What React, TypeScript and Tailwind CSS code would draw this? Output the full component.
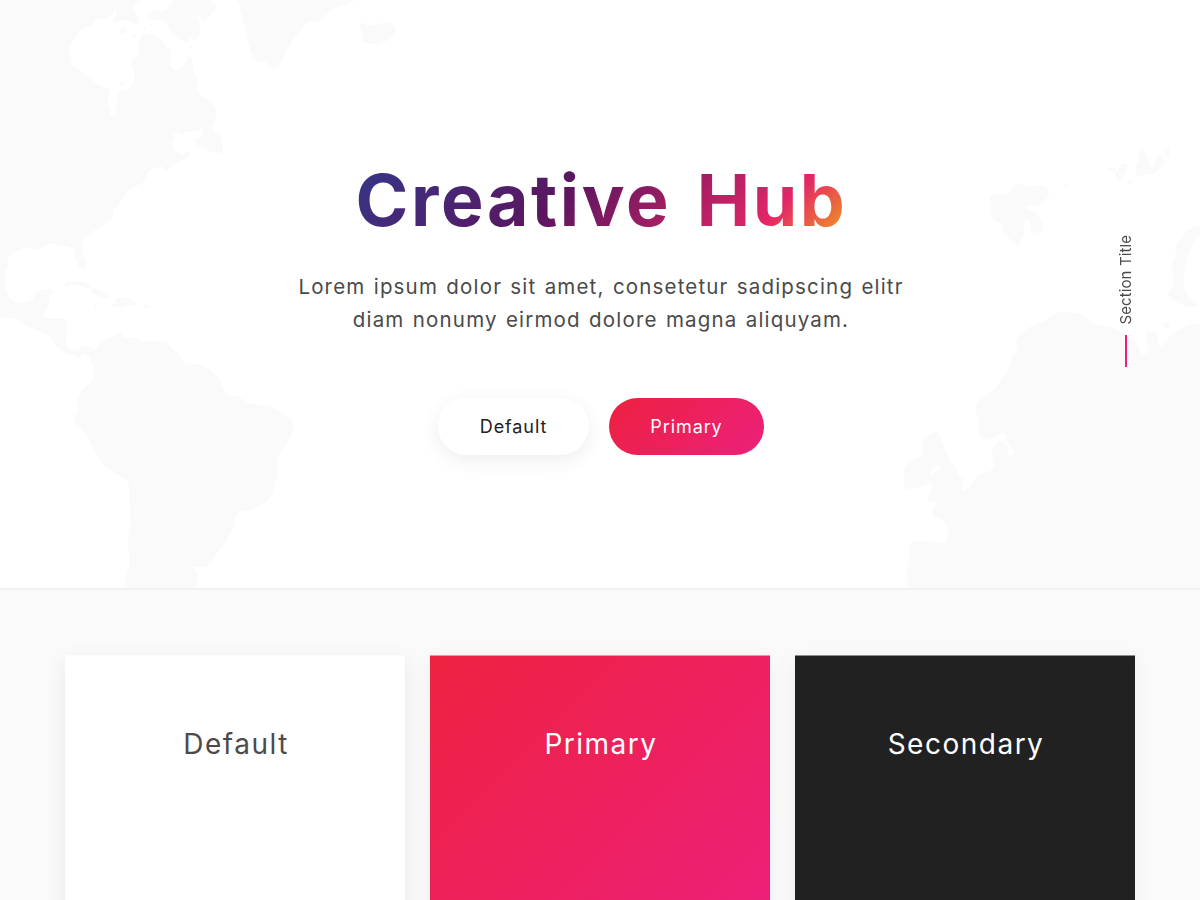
type Pt = [number, number];

const parse = (s: string): Pt[] =>
  s.trim().split(/\s+/).map((p) => p.split(",").map(Number) as Pt);

function coast(s: string): string {
  const p = parse(s);
  const n = p.length;
  const k = 0.13;
  let d = `M${p[0][0]},${p[0][1]}`;
  for (let i = 0; i < n; i++) {
    const a = p[(i - 1 + n) % n];
    const b = p[i];
    const c = p[(i + 1) % n];
    const e = p[(i + 2) % n];
    d += `C${b[0] + (c[0] - a[0]) * k},${b[1] + (c[1] - a[1]) * k} ${c[0] - (e[0] - b[0]) * k},${c[1] - (e[1] - b[1]) * k} ${c[0]},${c[1]}`;
  }
  return d + "Z";
}

const northAmerica =
  "-60,-60 460,-60 420,0 398,18 412,45 417,68 405,74 380,62 360,62 345,71 338,58 348,42 346,29 338,42 315,57 286,59 281,74 250,86 225,113 209,145 212,165 216,192 235,206 270,236 300,257 330,266 326,292 324,315 331,325 330,346 337,348 346,348 352,300 358,275 375,269 392,262 403,238 402,208 394,190 412,165 416,135 422,112 430,103 465,108 488,122 500,142 514,152 509,178 514,202 530,210 548,200 568,170 577,180 582,215 592,240 590,268 600,282 632,305 648,328 649,350 639,378 642,397 664,410 668,430 668,455 655,459 625,454 615,443 594,442 586,430 588,416 605,407 611,394 609,376 600,389 580,395 553,397 551,405 537,399 505,397 522,402 524,415 518,435 528,455 548,463 558,455 570,460 566,472 530,489 500,510 487,505 482,499 445,515 432,545 390,570 350,620 338,628 339,650 310,675 262,706 247,728 247,755 258,795 248,811 235,798 224,770 219,746 190,737 150,731 120,748 80,743 45,757 24,775 22,800 15,815 17,860 32,897 62,909 95,900 112,875 150,866 160,873 149,892 145,920 131,950 165,954 195,956 203,970 198,1030 215,1050 235,1048 255,1037 285,1047 310,1022 360,1000 370,1012 400,1013 435,1024 485,1024 520,1048 560,1091 595,1090 610,1102 625,1105 655,1135 675,1180 690,1188 715,1190 750,1210 815,1220 870,1255 878,1270 877,1300 865,1320 850,1350 830,1375 830,1425 820,1470 803,1500 790,1510 775,1518 745,1533 720,1535 703,1560 700,1580 675,1630 650,1660 645,1672 620,1701 583,1700 596,1727 592,1752 577,1766 560,1770 390,1770 375,1766 373,1750 388,1690 384,1620 390,1560 386,1455 370,1435 315,1400 285,1355 260,1305 225,1265 226,1250 235,1230 232,1200 245,1170 280,1135 278,1095 262,1065 248,1063 237,1077 220,1063 202,1063 165,1035 160,1020 130,998 80,980 50,957 0,952 -60,940";

const europe =
  "1020,60 960,75 930,72 880,100 850,130 845,138 835,135 832,102 820,93 798,97 799,128 805,155 785,162 778,145 760,120 740,110 710,88 680,78 650,75 625,60 605,43 545,35 520,42 490,65 455,78 415,108 408,130 412,150 397,170 380,215 345,265 300,300 286,320 294,360 297,400 310,417 330,418 372,399 380,425 403,455 400,464 383,468 384,445 372,424 350,427 336,455 343,490 335,510 295,525 265,563 245,572 250,540 230,522 230,510 200,465 190,430 175,402 165,395 135,409 128,430 130,462 100,480 75,505 72,550 82,569 110,564 145,550 150,522 165,497 183,506 158,520 146,537 158,560 142,597 170,608 192,600 165,615 157,640 165,652 190,663 206,690 200,720 190,728 130,722 100,723 86,740 88,770 77,822 85,842 82,858 90,868 120,872 990,872 1020,866";

const novayaZemlya =
  "1000,275 960,288 920,302 890,345 885,385 875,407 881,432 876,470 863,490 880,510 920,530 945,531 952,520 922,495 910,455 920,390 950,320 1000,295";

const upperIslands = [
  "520,-30 520,0 495,31 455,35 445,44 452,56 490,62 512,92 540,118 565,130 565,112 585,120 600,97 598,68 587,41 605,57 617,59 650,20 634,5 634,-30",
  "732,-30 726,40 740,92 745,130 760,170 775,182 800,188 802,199 820,205 840,196 858,153 893,103 925,67 955,64 1000,28 1066,0 1070,-30",
  "1078,77 1090,68 1108,78 1165,67 1187,87 1184,99 1165,120 1125,134 1090,126 1083,118 1088,95",
  "195,852 205,846 235,844 265,852 272,863 245,860 218,853 200,859",
  "280,865 300,870 325,885 322,894 300,890 275,875",
  "348,895 385,895 410,912 385,917 362,924 328,916 350,910",
  "358,96 362,87 380,86 380,94 368,102",
];

const arcticIslands = [
  "330,205 340,195 380,193 405,168 425,160 440,170 490,165 508,185 495,213 475,224 445,226 443,235 470,250 488,280 488,300 475,308 455,305 450,280 439,268 431,285 430,312 418,342 405,345 395,332 370,310 368,285 335,265 335,235",
  "768,105 776,90 780,65 788,57 800,72 812,107 825,108 830,78 845,75 852,103 828,125 785,137 768,134",
  "679,125 692,111 705,115 711,125 725,103 741,103 738,122 720,151 710,150 706,132 695,120",
];

function WorldMap() {
  return (
    <svg
      className="absolute inset-0 h-full w-full"
      viewBox="0 0 3600 1764"
      preserveAspectRatio="none"
      fill="#fafafa"
      aria-hidden="true"
    >
      <path d={coast(northAmerica)} />
      {upperIslands.map((s) => (
        <path key={s} d={coast(s)} />
      ))}
      <ellipse cx="403" cy="109" rx="6" ry="7" />
      <ellipse cx="435" cy="86" rx="3" ry="5" />
      <ellipse cx="450" cy="78" rx="4" ry="3" />
      <ellipse cx="365" cy="250" rx="8" ry="7" />
      <ellipse cx="574" cy="141" rx="4" ry="5" />
      <ellipse cx="438" cy="920" rx="9" ry="5" />
      <ellipse cx="286" cy="920" rx="6" ry="5" />
      <ellipse cx="504" cy="1030" rx="4" ry="5" />
      <g transform="translate(2640 900)">
        <path d={coast(europe)} />
        <circle cx="860" cy="76" r="10" />
      </g>
      <g transform="translate(2640 390)">
        <path d={coast(novayaZemlya)} />
        {arcticIslands.map((s) => (
          <path key={s} d={coast(s)} />
        ))}
        <ellipse cx="860" cy="65" rx="9" ry="13" />
        <ellipse cx="748" cy="155" rx="6" ry="4" />
        <ellipse cx="838" cy="138" rx="4" ry="5" />
        <ellipse cx="559" cy="166" rx="7" ry="6" />
      </g>
    </svg>
  );
}

export default function App() {
  return (
    <div className="h-[900px] w-[1200px] overflow-hidden bg-[#fafafa] font-['Inter',sans-serif]">
      <header className="relative h-[590px] border-b-2 border-[#f2f2f2] bg-white">
        <WorldMap />
        <div className="relative flex flex-col items-center pt-[155px]">
          <h1 className="bg-[linear-gradient(135deg,#33388a_0%,#5b165f_43%,#e32568_82%,#f09423_97%)] bg-clip-text pl-[3px] text-[71.5px] leading-[90px] font-[650] tracking-[2.6px] whitespace-nowrap text-transparent [word-spacing:6px]">
            Creative Hub
          </h1>
          <p className="mt-[25px] pl-[2px] text-center text-[20.5px] leading-[33px] font-[380] tracking-[1.17px] whitespace-nowrap text-[#4a4a4a] [word-spacing:1.4px]">
            Lorem ipsum dolor sit amet, consetetur sadipscing elitr
            <br />
            diam nonumy eirmod dolore magna aliquyam.
          </p>
          <div className="mt-[62px] flex gap-5 pl-[2px] text-[18px] tracking-[0.9px]">
            <button className="h-[57px] w-[151px] rounded-full bg-white text-[#212121] shadow-[0_5px_20px_rgba(0,0,0,0.07)]">
              Default
            </button>
            <button className="h-[57px] w-[155px] rounded-full bg-[linear-gradient(135deg,#ed213f,#ec207b)] text-white">
              Primary
            </button>
          </div>
        </div>
        <aside className="absolute top-[235px] right-[66px] flex h-[132px] w-4 flex-col items-center justify-between">
          <span className="rotate-180 text-[15px] leading-4 tracking-[0.1px] whitespace-nowrap text-[#4a4a4a] [writing-mode:vertical-rl]">
            Section Title
          </span>
          <span className="h-8 w-0.5 bg-[#ec2079]" />
        </aside>
      </header>
      <main className="grid grid-cols-3 gap-[25px] px-[65px] pt-[65px] text-center text-[28px] leading-[40px] font-[380] tracking-[1.5px]">
        <section className="h-[340px] border-t border-[#fcfcfc] bg-white pt-[68px] pl-[2px] text-[#4f4a4a] shadow-[0_5px_20px_rgba(0,0,0,0.07)]">
          Default
        </section>
        <section className="h-[340px] border-t border-[#f490a0] bg-[linear-gradient(135deg,#ee2240,#ec1f80)] pt-[68px] pl-[2px] text-white shadow-[0_5px_20px_rgba(0,0,0,0.05)]">
          Primary
        </section>
        <section className="h-[340px] border-t border-[#8d8d8d] bg-[#212121] pt-[68px] pl-[2px] text-white shadow-[0_5px_20px_rgba(0,0,0,0.05)]">
          Secondary
        </section>
      </main>
    </div>
  );
}
